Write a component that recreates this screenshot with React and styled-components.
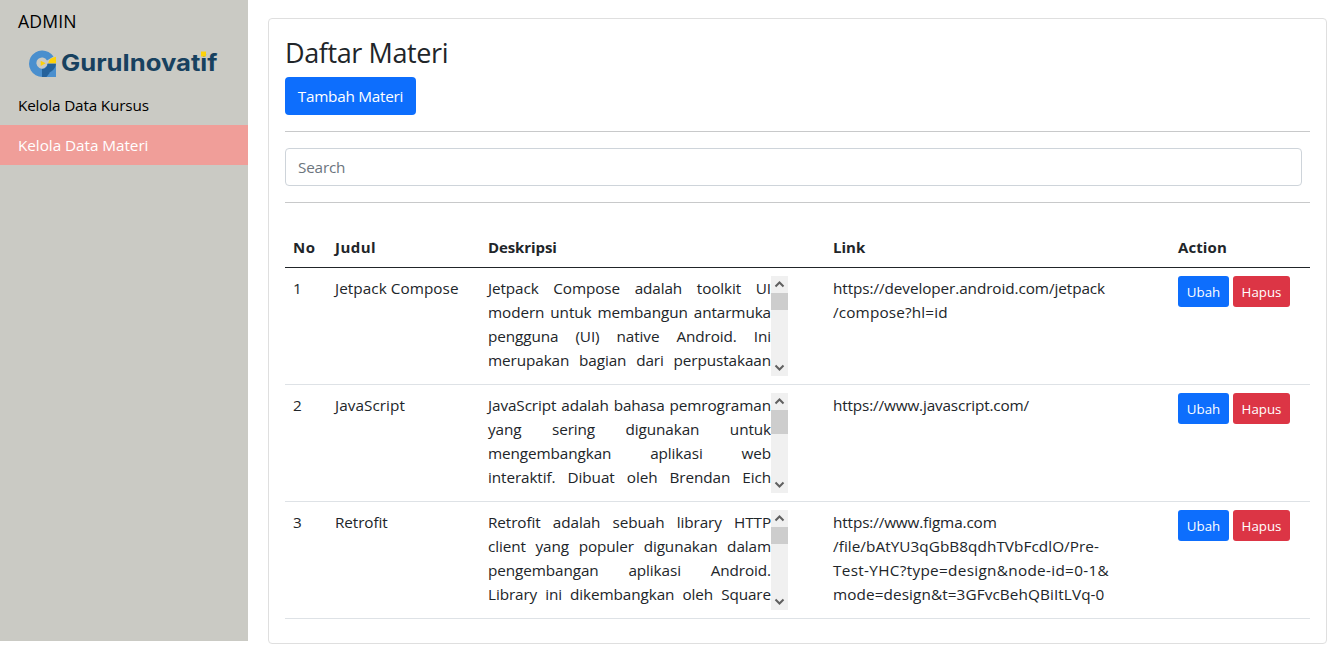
import React from "react";
import styled, { createGlobalStyle } from "styled-components";

const GlobalStyle = createGlobalStyle`
  *, *::before, *::after { box-sizing: border-box; }
  body {
    margin: 0;
    background: #fff;
    color: #212529;
    font-family: "Open Sans", "Noto Sans", sans-serif;
    font-size: 15.3px;
    line-height: 24px;
  }
`;

const Page = styled.div`
  display: flex;
  align-items: flex-start;
  height: 661px;
  overflow: hidden;
`;

const Sidebar = styled.aside`
  width: 248px;
  height: 641px;
  background: #cacac4;
  color: #000;
`;

const Brand = styled.div`
  height: 43px;
  padding: 9px 18px;
  font-size: 17.6px;
  letter-spacing: 0.15px;
`;

const LogoBox = styled.div`
  height: 42px;
  padding-left: 28px;

  svg { display: block; }
`;

const NavItem = styled.a`
  display: block;
  height: 40px;
  padding: 8px 18px;
  white-space: nowrap;
  letter-spacing: ${(p) => p.$track || 0}px;
  color: ${(p) => (p.$active ? "#fff" : "#000")};
  background: ${(p) => (p.$active ? "#f09e99" : "transparent")};
`;

const Card = styled.main`
  width: 1059px;
  height: 626px;
  margin: 18px 0 0 20px;
  padding: 16px;
  border: 1px solid #dfdfdf;
  border-radius: 4px;
`;

const Title = styled.h3`
  margin: 0 0 8px;
  height: 34px;
  font-size: 27px;
  font-weight: 400;
  line-height: 35px;
  letter-spacing: -0.4px;
`;

const Button = styled.button`
  display: inline-flex;
  align-items: center;
  justify-content: center;
  width: ${(p) => p.$width}px;
  height: ${(p) => (p.$small ? 31 : 38)}px;
  padding: ${(p) => (p.$small ? "1px 0 0" : "0")};
  border: 0;
  border-radius: ${(p) => (p.$small ? 3 : 4)}px;
  color: #fff;
  background: ${(p) => (p.$danger ? "#dc3545" : "#0d6efd")};
  font-family: inherit;
  font-size: ${(p) => (p.$small ? 13.3 : 15.3)}px;
  line-height: 24px;
  letter-spacing: ${(p) => p.$track || 0}px;
  white-space: nowrap;
`;

const TopButton = styled.div`
  display: flex;
  height: 38px;
`;

const Rule = styled.hr`
  height: 1px;
  margin: 16px 0;
  border: 0;
  background: #c8c9ca;
`;

const SearchInput = styled.input`
  display: block;
  width: 1017px;
  height: 38px;
  padding: 6px 12px;
  border: 1px solid #ced4da;
  border-radius: 4px;
  font: inherit;
  letter-spacing: -0.2px;
  color: #212529;

  &::placeholder { color: #6c757d; opacity: 1; }
`;

const Table = styled.table`
  width: 1025px;
  margin-top: 24px;
  border-collapse: separate;
  border-spacing: 0;
  table-layout: fixed;
`;

const HeadCell = styled.th`
  width: ${(p) => p.$width}px;
  height: 41px;
  padding: 8px;
  border-bottom: 1px solid #212529;
  text-align: left;
  font-weight: 700;
  font-size: 15px;
  letter-spacing: ${(p) => p.$track || 0}px;
`;

const Cell = styled.td`
  height: 117px;
  padding: 8px;
  border-bottom: 1px solid #dee2e6;
  vertical-align: top;
`;

const Line = styled.div`
  height: 24px;
  white-space: nowrap;
  letter-spacing: ${(p) => p.$track || 0}px;
`;

const JustifiedLine = styled(Line)`
  text-align: justify;
  text-align-last: justify;
`;

const Description = styled.div`
  display: flex;
  width: 300px;
  height: 100px;
`;

const DescriptionText = styled.div`
  width: 283px;
`;

const ScrollTrack = styled.div`
  display: flex;
  flex-direction: column;
  width: 17px;
  height: 100px;
  background: #f0f0f0;
`;

const ScrollArrow = styled.svg`
  display: block;
  width: 17px;
  height: 17px;
  fill: none;
  stroke: #606060;
  stroke-width: 2;
`;

const ScrollThumb = styled.div`
  height: ${(p) => p.$size}px;
  margin-bottom: auto;
  background: #cdcdcd;
`;

const Actions = styled.div`
  display: flex;
  gap: 4px;
`;

const columns = [
  { name: "No", width: 42, track: 0.5 },
  { name: "Judul", width: 153, track: 0.45 },
  { name: "Deskripsi", width: 345, track: -0.1 },
  { name: "Link", width: 345, track: 0 },
  { name: "Action", width: 140, track: 0.1 },
];

const rows = [
  {
    title: "Jetpack Compose",
    track: 0.05,
    thumb: 17,
    text: [
      "Jetpack Compose adalah toolkit UI",
      "modern untuk membangun antarmuka",
      "pengguna (UI) native Android. Ini",
      "merupakan bagian dari perpustakaan",
    ],
    link: [["https://developer.android.com/jetpack", -0.08], ["/compose?hl=id", 0.15]],
  },
  {
    title: "JavaScript",
    track: 0.05,
    thumb: 24,
    text: [
      "JavaScript adalah bahasa pemrograman",
      "yang sering digunakan untuk",
      "mengembangkan aplikasi web",
      "interaktif. Dibuat oleh Brendan Eich",
    ],
    link: [["https://www.javascript.com/", -0.15]],
  },
  {
    title: "Retrofit",
    track: -0.1,
    thumb: 17,
    text: [
      "Retrofit adalah sebuah library HTTP",
      "client yang populer digunakan dalam",
      "pengembangan aplikasi Android.",
      "Library ini dikembangkan oleh Square",
    ],
    link: [
      ["https://www.figma.com", -0.13],
      ["/file/bAtYU3qGbB8qdhTVbFcdlO/Pre-", 0.06],
      ["Test-YHC?type=design&node-id=0-1&", 0.32],
      ["mode=design&t=3GFvcBehQBiItLVq-0", 0.1],
    ],
  },
];

function Logo() {
  return (
    <svg width="192" height="36" viewBox="0 0 192 36" role="img" aria-label="GuruInovatif">
      <path d="M25.5 13.5A13.3 13.3 0 1 0 14.3 34H28V21H19.5A5.6 5.6 0 1 1 19 17.5Z" fill="#4a8fce" />
      <path d="M14 26.1A5.6 5.6 0 0 0 19.6 20.5H28C27.5 27 22.5 30.5 14 31.5Z" fill="#25629b" />
      <path d="M14 29L22 29.5L18.5 34H14Z" fill="#25629b" />
      <path d="M20.3 20.3C20.5 17 23 14.5 28 13.7V20.3Z" fill="#fdd20a" />
      <path d="M12.7 17.7L17.7 20.3L12.7 23Z" fill="#fdd20a" />
      <text
        x="33"
        y="27.5"
        textLength="156.5"
        lengthAdjust="spacingAndGlyphs"
        fontFamily="Inter, sans-serif"
        fontWeight="700"
        fontSize="22.5"
        fill="#17415f"
      >
        GuruInovatif
      </text>
      <rect x="173" y="8.5" width="5" height="5" fill="#fdd20a" />
    </svg>
  );
}

function ScrollBar({ size }) {
  return (
    <ScrollTrack>
      <ScrollArrow viewBox="0 0 17 17"><path d="M4.5 10.5L8.5 6.5L12.5 10.5" /></ScrollArrow>
      <ScrollThumb $size={size} />
      <ScrollArrow viewBox="0 0 17 17"><path d="M4.5 6.5L8.5 10.5L12.5 6.5" /></ScrollArrow>
    </ScrollTrack>
  );
}

export default function App() {
  return (
    <Page>
      <GlobalStyle />
      <Sidebar>
        <Brand>ADMIN</Brand>
        <LogoBox><Logo /></LogoBox>
        <NavItem $track={-0.17}>Kelola Data Kursus</NavItem>
        <NavItem $active $track={-0.05}>Kelola Data Materi</NavItem>
      </Sidebar>
      <Card>
        <Title>Daftar Materi</Title>
        <TopButton><Button $width={131} $track={-0.25}>Tambah Materi</Button></TopButton>
        <Rule />
        <SearchInput placeholder="Search" />
        <Rule />
        <Table>
          <thead>
            <tr>
              {columns.map((c) => (
                <HeadCell key={c.name} $width={c.width} $track={c.track}>{c.name}</HeadCell>
              ))}
            </tr>
          </thead>
          <tbody>
            {rows.map((row, i) => (
              <tr key={row.title}>
                <Cell>{i + 1}</Cell>
                <Cell><Line $track={row.track}>{row.title}</Line></Cell>
                <Cell>
                  <Description>
                    <DescriptionText>
                      {row.text.map((t) => <JustifiedLine key={t} $track={-0.1}>{t}</JustifiedLine>)}
                    </DescriptionText>
                    <ScrollBar size={row.thumb} />
                  </Description>
                </Cell>
                <Cell>
                  {row.link.map(([t, track]) => <Line key={t} $track={track}>{t}</Line>)}
                </Cell>
                <Cell>
                  <Actions>
                    <Button $small $width={51}>Ubah</Button>
                    <Button $small $danger $width={57}>Hapus</Button>
                  </Actions>
                </Cell>
              </tr>
            ))}
          </tbody>
        </Table>
      </Card>
    </Page>
  );
}
